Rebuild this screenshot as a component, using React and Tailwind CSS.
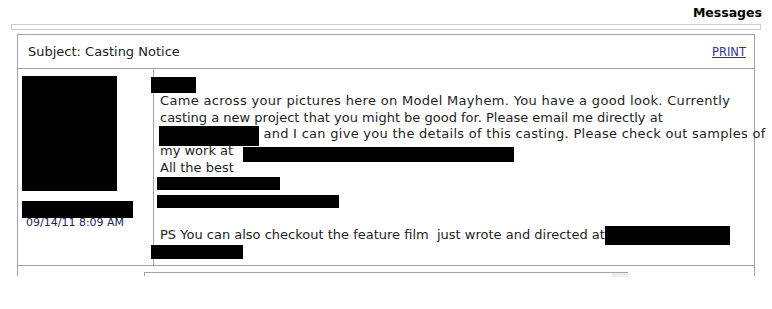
export default function App() {
  const line = "h-[16.8px] leading-[16.8px] flex items-start whitespace-pre";
  return (
    <div className="w-[772px] h-[309px] bg-white overflow-hidden font-['DejaVu_Sans',sans-serif] text-[#1e1e1e]">
      <div className="h-[24px] flex justify-end pr-[10px] pt-[5px]">
        <span className="font-['DejaVu_Sans',sans-serif] font-bold text-[12.5px] leading-[16px] text-black">Messages</span>
      </div>
      <div className="ml-[11px] mr-[11px] h-[6px] border border-[#cfcfcf] bg-white" />
      <div className="ml-[17px] mr-[17px] mt-[4px] border-x border-t border-[#a2a2b0]">
        <div className="h-[34px] flex items-center justify-between pl-[10px] pr-[8px] border-b border-[#a2a2b0]">
          <span className="text-[13px] leading-[16px] text-[#222] mt-[1px]">Subject: Casting Notice</span>
          <a className="text-[11.5px] leading-[14px] text-[#333399] underline">PRINT</a>
        </div>
        <div className="flex h-[197px] border-b border-[#a2a2b0]">
          <div className="w-[136px] shrink-0 border-r border-[#a2a2b0] pl-[4px] pt-[7px] flex flex-col">
            <div className="w-[95px] h-[115px] bg-black" />
            <div className="w-[111px] h-[17px] bg-black mt-[10px]" />
            <div className="ml-[4px] mt-[-2px] text-[11px] leading-[13px] text-[#22205e]">09/14/11 8:09 AM</div>
          </div>
          <div className="flex-1 min-w-0 pl-[6px] pt-[7px] text-[13px]">
            <div className={line}>
              <span className="inline-block bg-black w-[45px] h-[16px] ml-[-9px] mt-[1px]" />
            </div>
            <div className={line + " tracking-[0.32px]"}>Came across your pictures here on Model Mayhem. You have a good look. Currently</div>
            <div className={line}>casting a new project that you might be good for. Please email me directly at</div>
            <div className={line}>
              <span className="inline-block shrink-0 bg-black w-[100px] h-[20px] ml-[-1px] mt-[0px]" />
              <span className="shrink-0 tracking-[0.28px]"> and I can give you the details of this casting. Please check out samples of</span>
            </div>
            <div className={line}>
              <span>my work at</span>
              <span className="inline-block shrink-0 bg-black w-[271px] h-[15px] ml-[10px] mt-[4px]" />
            </div>
            <div className={line}>All the best</div>
            <div className={line}>
              <span className="inline-block bg-black w-[123px] h-[13px] ml-[-3px] mt-[0px]" />
            </div>
            <div className={line}>
              <span className="inline-block bg-black w-[182px] h-[13px] ml-[-3px] mt-[1px]" />
            </div>
            <div className={line}> </div>
            <div className={line}>
              <span className="shrink-0">PS You can also checkout the feature film  just wrote and directed at</span>
              <span className="inline-block shrink-0 bg-black w-[125px] h-[19px] mt-[-1px]" />
            </div>
            <div className={line}>
              <span className="inline-block bg-black w-[92px] h-[14px] ml-[-9px] mt-[1px]" />
            </div>
          </div>
        </div>
        <div className="h-[10px] pt-[6px] pl-[126px]">
          <div className="w-[484px] h-[4px] border-t border-l border-[#a2a2b0] flex justify-end">
            <div className="w-[16px] h-[4px] bg-[#ececf0]" />
          </div>
        </div>
      </div>
    </div>
  );
}
